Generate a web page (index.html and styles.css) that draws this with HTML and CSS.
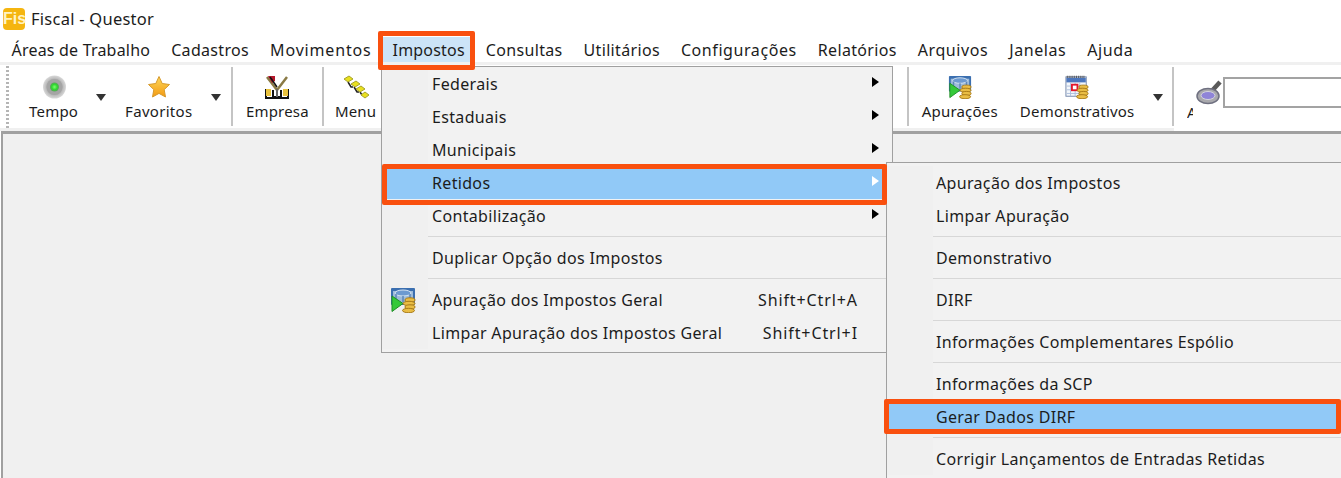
FILE: index.html
```html
<!DOCTYPE html>
<html lang="pt-BR">
	<head>
		<meta charset="UTF-8">
		<title>Fiscal - Questor</title>
		<link rel="stylesheet" href="styles.css">
	</head>
	<body>
		<svg class="defs" width="0" height="0">
			<defs>
				<linearGradient id="star-fill" x1="0" y1="0" x2="0" y2="1">
					<stop offset="0" stop-color="#fdd85a"/>
					<stop offset="1" stop-color="#f39a12"/>
				</linearGradient>
				<radialGradient id="lamp-ring">
					<stop offset="0.45" stop-color="#8a8a8a"/>
					<stop offset="0.75" stop-color="#bdbdbd"/>
					<stop offset="1" stop-color="#d9d9d9"/>
				</radialGradient>
				<radialGradient id="lamp-light">
					<stop offset="0" stop-color="#7dff6f"/>
					<stop offset="0.6" stop-color="#2fd92f"/>
					<stop offset="1" stop-color="#5f9f5f"/>
				</radialGradient>
			</defs>
			<symbol id="coins" viewBox="0 0 14 16">
				<ellipse cx="8" cy="3" rx="5" ry="2.200" fill="#e9bd45" stroke="#a87a17"/>
				<ellipse cx="7" cy="6.500" rx="6" ry="2.200" fill="#e9bd45" stroke="#a87a17"/>
				<ellipse cx="8" cy="10" rx="5" ry="2.200" fill="#e9bd45" stroke="#a87a17"/>
				<ellipse cx="6.500" cy="13.500" rx="6" ry="2.200" fill="#e9bd45" stroke="#a87a17"/>
			</symbol>
			<symbol id="ico-apur" viewBox="0 0 26 26">
				<rect x="1" y="1" width="24" height="17" rx="1" fill="#3b6fb0"/>
				<rect x="3" y="4" width="20" height="12" fill="#9dbbd9"/>
				<ellipse cx="13" cy="6" rx="8" ry="3" fill="#6d9ad0" stroke="#d6e4f2"/>
				<path d="M6 7v8M13 9v6M20 7v8" stroke="#5c86b8" stroke-width="1.500"/>
				<path d="M2 9l11 7.500-11 8z" fill="#35c93a" stroke="#1f8f25"/>
				<use href="#coins" x="12" y="10" width="14" height="16"/>
			</symbol>
		</svg>

		<header class="title-bar">
			<span class="app-icon">Fis</span>
			<span class="app-name">Fiscal - Questor</span>
		</header>

		<nav class="menu-bar">
			<span class="menu-top tight">Áreas de Trabalho</span>
			<span class="menu-top">Cadastros</span>
			<span class="menu-top wider">Movimentos</span>
			<span class="menu-top active">Impostos</span>
			<span class="menu-top">Consultas</span>
			<span class="menu-top">Utilitários</span>
			<span class="menu-top wide">Configurações</span>
			<span class="menu-top">Relatórios</span>
			<span class="menu-top wide">Arquivos</span>
			<span class="menu-top wide">Janelas</span>
			<span class="menu-top wide">Ajuda</span>
		</nav>

		<div class="toolbar">
			<div class="tool-group">
				<div class="grip"></div>
				<div class="tool tempo">
					<svg width="24" height="24" viewBox="0 0 24 24">
						<circle cx="12.500" cy="12" r="11.500" fill="url(#lamp-ring)"/>
						<circle cx="12.500" cy="12" r="8" fill="#a5a5a5"/>
						<circle cx="12.500" cy="12" r="4.500" fill="url(#lamp-light)"/>
					</svg>
					<span>Tempo</span>
				</div>
				<i class="drop drop-tempo"></i>
				<div class="tool favoritos">
					<svg width="24" height="24" viewBox="0 0 24 24">
						<path d="M12 1.500l3.200 7 7.300 1-5.300 5.100 1.300 7.400-6.500-3.600-6.500 3.600 1.300-7.400L1.500 9.500l7.300-1z" fill="url(#star-fill)" stroke="#d79a2c" stroke-linejoin="round"/>
					</svg>
					<span>Favoritos</span>
				</div>
				<i class="drop drop-fav"></i>
				<i class="tool-sep sep-fav"></i>
				<div class="tool empresa">
					<svg width="26" height="24" viewBox="0 0 26 24">
						<path d="M3 2l10 13M23 2L13 15" stroke="#8a7a45" stroke-width="2.500" fill="none"/>
						<path d="M4 1h7v5l-3 2z" fill="#b3162a"/>
						<path d="M6 2l7 10" stroke="#111" stroke-width="1.500"/>
						<path d="M1 14h2v8h5v-7h2v6h6v-6h2v7h5v-8h2v10H1z" fill="#111"/>
						<rect x="2" y="14" width="5" height="7" fill="#e9c23e"/>
						<rect x="19" y="14" width="5" height="7" fill="#e9c23e"/>
						<rect x="12" y="14" width="2" height="8" fill="#666"/>
					</svg>
					<span>Empresa</span>
				</div>
				<i class="tool-sep"></i>
				<div class="tool menu-tool">
					<svg width="26" height="24" viewBox="0 0 26 24">
						<path d="M5 7l3 5h2M11 12l3 5h2M17 17l2 3" stroke="#222" stroke-width="1.500" fill="none"/>
						<path d="M1 4l5-3 4 3-5 3zM8 9l5-3 4 3-5 3zM13 14l5-3 4 3-5 3zM18 20l4-3 4 3-4 3z" fill="#e9e01e" stroke="#a8a32c"/>
					</svg>
					<span>Menu</span>
				</div>
			</div>

			<div class="tool-group">
				<i class="tool-sep"></i>
				<div class="tool apuracoes">
					<svg width="26" height="26"><use href="#ico-apur"/></svg>
					<span>Apurações</span>
				</div>
				<div class="tool demonstrativos">
					<svg width="26" height="26" viewBox="0 0 26 26">
						<rect x="1" y="2" width="22" height="21" fill="#f4f7fb" stroke="#6f83a8"/>
						<rect x="1.500" y="3" width="21" height="5" fill="#4c76bd"/>
						<path d="M2 2h20" stroke="#555" stroke-dasharray="1 1" stroke-width="2.500"/>
						<path d="M2 12h20M2 16h20M2 20h20M6 8v15M11 8v15M16 8v15" stroke="#a9bddb"/>
						<rect x="7.500" y="10.500" width="6" height="6" fill="#fff" stroke="#e3172b" stroke-width="2"/>
						<use href="#coins" x="12" y="10" width="14" height="16"/>
					</svg>
					<span>Demonstrativos</span>
				</div>
				<i class="drop drop-dem"></i>
				<i class="tool-sep sep-dem"></i>
				<div class="search">
					<span class="search-label">A</span>
					<svg class="lens" width="26" height="25" viewBox="0 0 26 25">
						<path d="M14 13L24 2" stroke="#5a5a5a" stroke-width="4.500"/>
						<ellipse cx="12" cy="16" rx="11" ry="7.500" fill="#a9a9ad" stroke="#6f7080" stroke-width="1.500"/>
						<ellipse cx="12" cy="15.500" rx="7" ry="4" fill="#8f84d8" stroke="#d5d5de"/>
					</svg>
					<div class="search-box"></div>
				</div>
			</div>
		</div>

		<main class="work-area"></main>

		<div class="menu main-menu">
			<div class="item"><span class="gutter"></span><span class="label">Federais</span><i class="arrow"></i></div>
			<div class="item"><span class="gutter"></span><span class="label">Estaduais</span><i class="arrow"></i></div>
			<div class="item"><span class="gutter"></span><span class="label">Municipais</span><i class="arrow"></i></div>
			<div class="item selected"><span class="gutter"></span><span class="label">Retidos</span><i class="arrow"></i></div>
			<div class="item"><span class="gutter"></span><span class="label">Contabilização</span><i class="arrow"></i></div>
			<div class="sep"></div>
			<div class="item"><span class="gutter"></span><span class="label">Duplicar Opção dos Impostos</span></div>
			<div class="sep"></div>
			<div class="item">
				<span class="gutter"><svg width="26" height="26"><use href="#ico-apur"/></svg></span>
				<span class="label">Apuração dos Impostos Geral</span>
				<span class="shortcut">Shift+Ctrl+A</span>
			</div>
			<div class="item">
				<span class="gutter"></span>
				<span class="label">Limpar Apuração dos Impostos Geral</span>
				<span class="shortcut">Shift+Ctrl+I</span>
			</div>
		</div>

		<div class="menu sub-menu">
			<div class="item"><span class="gutter"></span><span class="label">Apuração dos Impostos</span></div>
			<div class="item"><span class="gutter"></span><span class="label">Limpar Apuração</span></div>
			<div class="sep"></div>
			<div class="item"><span class="gutter"></span><span class="label">Demonstrativo</span></div>
			<div class="sep"></div>
			<div class="item"><span class="gutter"></span><span class="label">DIRF</span></div>
			<div class="sep"></div>
			<div class="item"><span class="gutter"></span><span class="label">Informações Complementares Espólio</span></div>
			<div class="sep"></div>
			<div class="item"><span class="gutter"></span><span class="label">Informações da SCP</span></div>
			<div class="item selected"><span class="gutter"></span><span class="label">Gerar Dados DIRF</span></div>
			<div class="sep"></div>
			<div class="item"><span class="gutter"></span><span class="label">Corrigir Lançamentos de Entradas Retidas</span></div>
		</div>

		<div class="mark mark-impostos"></div>
		<div class="mark mark-retidos"></div>
		<div class="mark mark-gerar"></div>
	</body>
</html>
```

FILE: styles.css
```css
html, body {
	margin: 0;
	height: 478px;
	overflow: hidden;
}

body {
	position: relative;
	display: flex;
	flex-direction: column;
	font-family: "Noto Sans", sans-serif;
	font-size: 16px;
	letter-spacing: 0.33px;
	color: #1c1c1c;
	background-color: #fff;
}

.defs {
	position: absolute;
}

.title-bar {
	display: flex;
	align-items: center;
	gap: 6px;
	height: 37px;
	padding-left: 3px;
}

.app-name {
	font-size: 16.500px;
	letter-spacing: 0.25px;
}

.app-icon {
	display: block;
	width: 22px;
	height: 22px;
	border-radius: 4px;
	background-color: #f5b50f;
	color: #fff3c4;
	font-family: "Liberation Sans", sans-serif;
	font-size: 16px;
	font-weight: 700;
	line-height: 22px;
	text-align: center;
	letter-spacing: 0;
}

.menu-bar {
	display: flex;
	height: 25px;
	padding-left: 1px;
}

.menu-top {
	height: 25px;
	padding: 0 10.500px;
	line-height: 27px;
}

.menu-top.tight {
	letter-spacing: 0.2px;
}

.menu-top.wide {
	letter-spacing: 0.58px;
}

.menu-top.wider {
	letter-spacing: 0.83px;
}

.menu-top.active {
	background-color: #cce4f7;
	letter-spacing: 0.2px;
}

.toolbar {
	display: flex;
	justify-content: space-between;
	height: 63px;
	border-top: 3px solid #f0f0f0;
	border-bottom: 3px solid #f0f0f0;
	font-size: 15px;
	letter-spacing: 0.2px;
}

.tool-group {
	display: flex;
	align-items: stretch;
}

.grip {
	width: 3px;
	margin: 1px 0 0 6px;
	background-image: linear-gradient(#b5b5b5 50%, transparent 50%);
	background-size: 3px 4px;
}

.tool {
	display: flex;
	flex-direction: column;
	align-items: center;
	padding-top: 10px;
	height: 53px;
	gap: 1px;
}

.tool svg {
	display: block;
	height: 24px;
}

.tool span {
	line-height: 22px;
	white-space: nowrap;
}

.tool-sep {
	width: 2px;
	height: 59px;
	margin-top: 2px;
	background-color: #c4c4c4;
}

.drop {
	width: 0;
	height: 0;
	margin-top: 29px;
	border: 5.500px solid transparent;
	border-top: 7px solid #333;
	border-bottom: 0;
}

.tempo {
	margin-left: 20px;
}

.drop-tempo,
.drop-dem {
	margin-left: 18px;
}

.favoritos,
.drop-fav {
	margin-left: 19px;
}

.favoritos span {
	letter-spacing: 0.3px;
}

.sep-fav,
.sep-dem {
	margin-left: 9.500px;
}

.empresa {
	margin: 0 13px;
}

.menu-tool {
	margin-left: 11px;
}

.apuracoes {
	margin-left: 13px;
}

.demonstrativos {
	margin-left: 22px;
}

.search {
	display: flex;
	position: relative;
	width: 167px;
	height: 66px;
	background-color: #fff;
}

.search-label {
	width: 6px;
	margin-left: 13px;
	padding-top: 36px;
	line-height: 22px;
	height: 22px;
	overflow: hidden;
}

.lens {
	margin: 15px 0 0 3px;
}

.search-box {
	flex: 1;
	box-sizing: border-box;
	height: 31px;
	margin: 12px -4px 0 1px;
	border: 2px solid #a3a3a3;
	background-color: #fff;
}

.work-area {
	flex: 1;
	margin-left: 1px;
	background-color: #f0f0f0;
	border-top: 3px solid #a0a0a0;
	border-left: 2px solid #a0a0a0;
}

.menu {
	position: absolute;
	box-sizing: border-box;
	border: 1px solid #a0a0a0;
	background-color: #f2f2f2;
}

.main-menu {
	left: 381px;
	top: 66px;
	width: 512px;
	height: 287px;
}

.sub-menu {
	left: 886px;
	top: 162px;
	width: 460px;
	height: 330px;
	padding-top: 3px;
}

.item {
	display: flex;
	align-items: center;
	height: 33px;
}

.item.selected {
	background-color: #91c9f7;
}

.gutter {
	display: flex;
	align-items: center;
	justify-content: center;
	width: 46px;
	height: 100%;
	padding-right: 4px;
	box-sizing: border-box;
	background-color: #f0f0f0;
}

.item.selected .gutter {
	background-color: transparent;
}

.label {
	flex: 1;
	padding-left: 4px;
}

.sub-menu .label {
	padding-left: 3px;
}

.shortcut {
	margin-right: 34px;
	letter-spacing: 0.9px;
}

.arrow {
	width: 0;
	height: 0;
	margin: 0 13px 3px 0;
	border-left: 7px solid #000;
	border-top: 5px solid transparent;
	border-bottom: 5px solid transparent;
}

.item.selected .arrow {
	border-left-color: #fff;
}

.sep {
	height: 9px;
	background:
		linear-gradient(#d7d7d7, #d7d7d7) 46px 4px / 100% 1px no-repeat,
		linear-gradient(#f0f0f0, #f0f0f0) 0 0 / 46px 100% no-repeat,
		#f2f2f2;
}

.mark {
	position: absolute;
	box-sizing: border-box;
	border: 5px solid #f9500f;
	border-radius: 2px;
}

.mark-impostos {
	left: 378px;
	top: 31px;
	width: 97px;
	height: 39px;
}

.mark-retidos {
	left: 382px;
	top: 164px;
	width: 505px;
	height: 41px;
}

.mark-gerar {
	left: 884px;
	top: 399px;
	width: 457px;
	height: 35px;
}
```
